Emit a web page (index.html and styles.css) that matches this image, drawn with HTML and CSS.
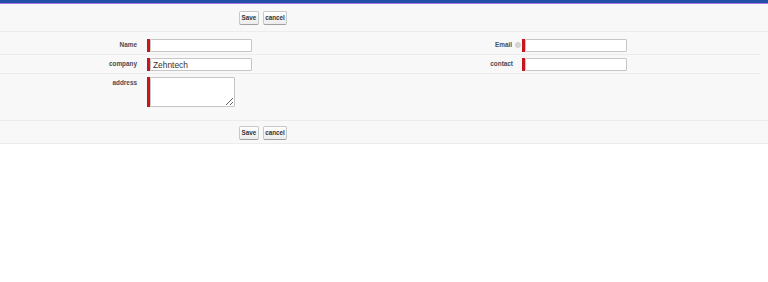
FILE: index.html
```html
<!DOCTYPE html>
<html>
<head>
<meta charset="utf-8">
<link rel="stylesheet" href="styles.css">
</head>
<body>
<div class="topbar"></div>
<div class="block">
  <div class="btnrow top">
    <button class="btn">Save</button><button class="btn">cancel</button>
  </div>
  <div class="fields">
    <div class="row r1">
      <div class="lbl">Name</div>
      <div class="val"><span class="req"></span><input class="inp" type="text"></div>
      <div class="lbl help">Email<span class="hi"></span></div>
      <div class="val"><span class="req"></span><input class="inp" type="text"></div>
    </div>
    <div class="row r2">
      <div class="lbl">company</div>
      <div class="val"><span class="req"></span><input class="inp" type="text" value="Zehntech"></div>
      <div class="lbl">contact</div>
      <div class="val"><span class="req"></span><input class="inp" type="text"></div>
    </div>
    <div class="row r3">
      <div class="lbl">address</div>
      <div class="val"><span class="req tall"></span><textarea class="ta"></textarea></div>
      <div class="lbl"></div>
      <div class="val"></div>
    </div>
  </div>
  <div class="btnrow bottom">
    <button class="btn">Save</button><button class="btn">cancel</button>
  </div>
</div>
</body>
</html>
```
FILE: styles.css
```css
html, body {
  margin: 0;
  padding: 0;
  background: #ffffff;
  font-family: "Liberation Sans", Arial, sans-serif;
}
.topbar {
  height: 3px;
  background: #2350a6;
  border-bottom: 1px solid #a878e0;
}
.block {
  background: #f8f8f8;
  border-bottom: 1px solid #ececec;
}
.btnrow {
  box-sizing: border-box;
  display: flex;
  gap: 4px;
  padding-left: 239px;
}
.btnrow.top {
  height: 28px;
  padding-top: 7px;
  border-bottom: 1px solid #ececec;
}
.btnrow.bottom {
  height: 23px;
  padding-top: 5px;
  border-top: 1px solid #ececec;
}
.btn {
  box-sizing: border-box;
  height: 14px;
  padding: 0 1.5px;
  margin: 0;
  font-family: "Liberation Sans", Arial, sans-serif;
  font-size: 6.3px;
  font-weight: bold;
  color: #333333;
  background: linear-gradient(#ffffff, #ececec);
  border: 1px solid #c8c8c8;
  border-bottom-color: #a0a0a0;
  border-radius: 2px;
  line-height: 12px;
}
.fields {
  margin-right: 7px;
}
.row {
  display: grid;
  grid-template-columns: 147px 237px 138px 1fr;
  box-sizing: border-box;
}
.row.r1 {
  height: 23px;
  padding-top: 7px;
  border-bottom: 1px solid #ececec;
}
.row.r2 {
  height: 19px;
  padding-top: 3px;
  border-bottom: 1px solid #ececec;
}
.row.r3 {
  height: 46px;
  padding-top: 3px;
}
.lbl {
  box-sizing: border-box;
  display: flex;
  justify-content: flex-end;
  align-items: flex-start;
  padding-right: 10px;
  padding-top: 2px;
  font-size: 6.4px;
  line-height: 8px;
  font-weight: bold;
  color: #4a4a56;
}
.row .lbl:nth-child(3) {
  padding-right: 9px;
}
.row .lbl.help {
  padding-right: 1px;
}
.hi {
  display: inline-block;
  width: 6px;
  height: 6px;
  margin-left: 3px;
  margin-top: 1px;
  border-radius: 50%;
  background: #d4d4d4;
  border: 0;
}
.val {
  display: flex;
  align-items: flex-start;
}
.req {
  display: block;
  width: 3px;
  height: 13px;
  background: #c8161d;
  flex: none;
}
.req.tall {
  height: 30px;
}
.inp {
  box-sizing: border-box;
  width: 102px;
  height: 13px;
  margin: 0;
  padding: 0 2px;
  border: 1px solid #c6c6c6;
  border-radius: 1px;
  background: #ffffff;
  font-family: "Liberation Sans", Arial, sans-serif;
  font-size: 8.4px;
  color: #333333;
  outline: none;
}
.ta {
  box-sizing: border-box;
  width: 85px;
  height: 30px;
  margin: 0;
  padding: 1px 2px;
  border: 1px solid #c6c6c6;
  border-radius: 1px;
  background: #ffffff;
  font-family: "Liberation Sans", Arial, sans-serif;
  font-size: 8px;
  resize: both;
}
```
